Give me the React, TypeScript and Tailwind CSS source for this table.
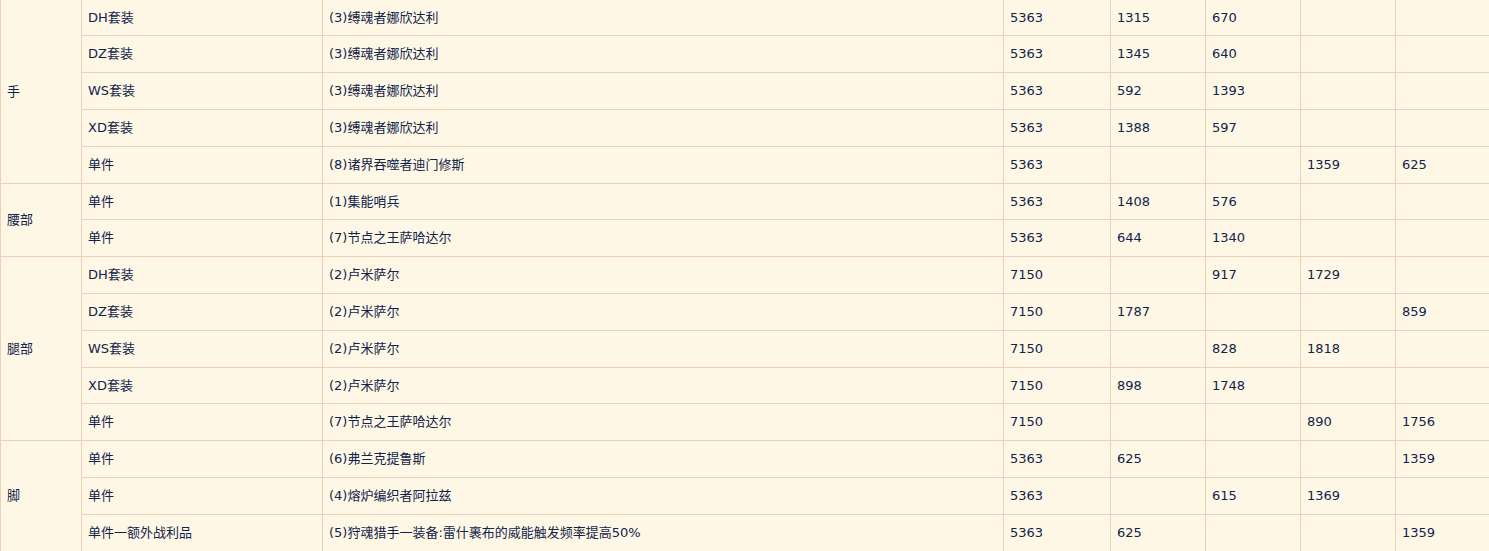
import React from "react";

type Row = {
  group?: { label: string; span: number };
  type: string;
  item: string;
  vals: string[];
  h: number;
};

const rows: Row[] = [
  { group: { label: "手", span: 5 }, type: "DH套装", item: "(3)缚魂者娜欣达利", vals: ["5363", "1315", "670", "", ""], h: 36 },
  { type: "DZ套装", item: "(3)缚魂者娜欣达利", vals: ["5363", "1345", "640", "", ""], h: 37 },
  { type: "WS套装", item: "(3)缚魂者娜欣达利", vals: ["5363", "592", "1393", "", ""], h: 37 },
  { type: "XD套装", item: "(3)缚魂者娜欣达利", vals: ["5363", "1388", "597", "", ""], h: 37 },
  { type: "单件", item: "(8)诸界吞噬者迪门修斯", vals: ["5363", "", "", "1359", "625"], h: 37 },
  { group: { label: "腰部", span: 2 }, type: "单件", item: "(1)集能哨兵", vals: ["5363", "1408", "576", "", ""], h: 36 },
  { type: "单件", item: "(7)节点之王萨哈达尔", vals: ["5363", "644", "1340", "", ""], h: 37 },
  { group: { label: "腿部", span: 5 }, type: "DH套装", item: "(2)卢米萨尔", vals: ["7150", "", "917", "1729", ""], h: 37 },
  { type: "DZ套装", item: "(2)卢米萨尔", vals: ["7150", "1787", "", "", "859"], h: 37 },
  { type: "WS套装", item: "(2)卢米萨尔", vals: ["7150", "", "828", "1818", ""], h: 37 },
  { type: "XD套装", item: "(2)卢米萨尔", vals: ["7150", "898", "1748", "", ""], h: 36 },
  { type: "单件", item: "(7)节点之王萨哈达尔", vals: ["7150", "", "", "890", "1756"], h: 37 },
  { group: { label: "脚", span: 3 }, type: "单件", item: "(6)弗兰克提鲁斯", vals: ["5363", "625", "", "", "1359"], h: 37 },
  { type: "单件", item: "(4)熔炉编织者阿拉兹", vals: ["5363", "", "615", "1369", ""], h: 37 },
  { type: "单件一额外战利品", item: "(5)狩魂猎手一装备:雷什裹布的威能触发频率提高50%", vals: ["5363", "625", "", "", "1359"], h: 37 },
];

const cell = "border-r border-b border-[#eed0b8] pl-[6px] pr-1 align-middle whitespace-nowrap";

const heightClass: Record<number, string> = {
  36: "h-[36px]",
  37: "h-[37px]",
};

export default function App() {
  return (
    <div
      className="w-[1489px] h-[551px] overflow-hidden bg-[#fff7e6] text-[13px] text-[#10244a]"
      style={{ fontFamily: '"DejaVu Sans", Verdana, "Noto Sans CJK SC", sans-serif' }}
    >
      <table className="border-separate border-spacing-0 border-l border-[#eed0b8] table-fixed w-[1496px]">
        <colgroup>
          <col className="w-[81px]" />
          <col className="w-[241px]" />
          <col className="w-[681px]" />
          <col className="w-[107px]" />
          <col className="w-[95px]" />
          <col className="w-[95px]" />
          <col className="w-[95px]" />
          <col className="w-[100px]" />
        </colgroup>
        <tbody>
          {rows.map((r, i) => (
            <tr key={i} className={heightClass[r.h]}>
              {r.group && (
                <td rowSpan={r.group.span} className={cell}>
                  {r.group.label}
                </td>
              )}
              <td className={`${cell} ${heightClass[r.h]}`}>{r.type}</td>
              <td className={cell}>{r.item}</td>
              {r.vals.map((v, j) => (
                <td key={j} className={cell}>
                  {v}
                </td>
              ))}
            </tr>
          ))}
        </tbody>
      </table>
    </div>
  );
}
